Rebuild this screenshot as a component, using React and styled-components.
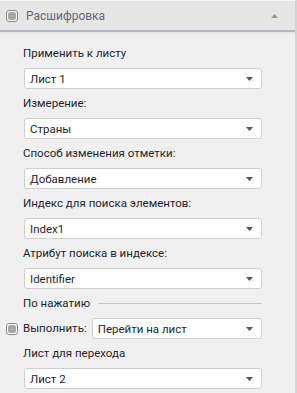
import React from 'react';
import styled, { createGlobalStyle } from 'styled-components';

const GlobalStyle = createGlobalStyle`
    html, body {
        margin: 0;
        padding: 0;
        background: #f0f0f0;
    }
    body {
        font-family: Roboto, "Open Sans", sans-serif;
        font-size: 11.5px;
    }
`;

function Checkbox() {
    return <CheckboxBox><span /></CheckboxBox>;
}

function Select({value, width}) {
    return (
        <SelectBox $width={width}>
            <span>{value}</span>
            <svg width="7" height="4" viewBox="0 0 7 4">
                <path d="M0 0 H7 L3.5 4 Z" fill="#555" />
            </svg>
        </SelectBox>
    );
}

function Field({label, value}) {
    return (
        <FieldBox>
            <Label>{label}</Label>
            <Select value={value} />
        </FieldBox>
    );
}

const fields = [
    {id: 1, label: 'Применить к листу', value: 'Лист 1'},
    {id: 2, label: 'Измерение:', value: 'Страны'},
    {id: 3, label: 'Способ изменения отметки:', value: 'Добавление'},
    {id: 4, label: 'Индекс для поиска элементов:', value: 'Index1'},
    {id: 5, label: 'Атрибут поиска в индексе:', value: 'Identifier'},
];

export default function App() {
    return (
        <>
            <GlobalStyle />
            <Panel>
                <Header>
                    <Checkbox />
                    <Title>Расшифровка</Title>
                    <svg width="7" height="4" viewBox="0 0 7 4">
                        <path d="M3.5 0 L7 4 H0 Z" fill="#999" />
                    </svg>
                </Header>
                <Body>
                    {fields.map((f) => (
                        <Field key={f.id} label={f.label} value={f.value} />
                    ))}
                    <Divider>
                        <span>По нажатию</span>
                    </Divider>
                    <ActionRow>
                        <Checkbox />
                        <Label>Выполнить:</Label>
                        <Select value="Перейти на лист" width="171px" />
                    </ActionRow>
                    <Field label="Лист для перехода" value="Лист 2" />
                </Body>
            </Panel>
        </>
    );
}

const Panel = styled.div`
    width: 295px;
    height: 393px;
    background: #f0f0f0;
    border-right: 2px solid #d4d4d4;
    display: flex;
    flex-direction: column;
    overflow: hidden;
`;

const Header = styled.div`
    height: 29px;
    flex-shrink: 0;
    display: flex;
    align-items: center;
    gap: 8px;
    padding: 0 17px 0 6px;
    background: #e6e6e6;
    border-top: 1px solid #f4f4f4;
    border-bottom: 2px solid #b4b8c2;
    box-shadow: 0 1px 2px rgba(0, 0, 0, 0.06);
    svg {
        margin-left: auto;
    }
`;

const Title = styled.div`
    color: #66667a;
    font-size: 12px;
`;

const CheckboxBox = styled.div`
    width: 12px;
    height: 12px;
    box-sizing: border-box;
    border: 1px solid #8a8a8a;
    border-radius: 3px;
    background: #fff;
    padding: 1px;
    flex-shrink: 0;
    span {
        display: block;
        width: 100%;
        height: 100%;
        border-radius: 2px;
        background: #a8a8a8;
    }
`;

const Body = styled.div`
    display: flex;
    flex-direction: column;
    padding: 13px 33px 0 23px;
    gap: 6px;
`;

const FieldBox = styled.div`
    display: flex;
    flex-direction: column;
    gap: 6px;
`;

const Label = styled.div`
    color: #1f1f2a;
    line-height: 17px;
    white-space: nowrap;
`;

const SelectBox = styled.div`
    width: ${(p) => p.$width || 'auto'};
    margin-left: 1px;
    height: 21px;
    box-sizing: border-box;
    display: flex;
    align-items: center;
    justify-content: space-between;
    padding: 0 8px 0 5px;
    background: #fff;
    border: 1px solid #cfcfcf;
    border-radius: 3px;
    color: #1f1f2a;
`;

const Divider = styled.div`
    display: flex;
    align-items: center;
    gap: 8px;
    color: #1f1f2a;
    line-height: 17px;
    &::after {
        content: "";
        flex: 1;
        height: 1px;
        background: #c4c4c4;
    }
`;

const ActionRow = styled.div`
    display: flex;
    align-items: center;
    margin-left: -17px;
    gap: 5px;
    ${SelectBox} {
        margin-left: 0;
    }
`;
